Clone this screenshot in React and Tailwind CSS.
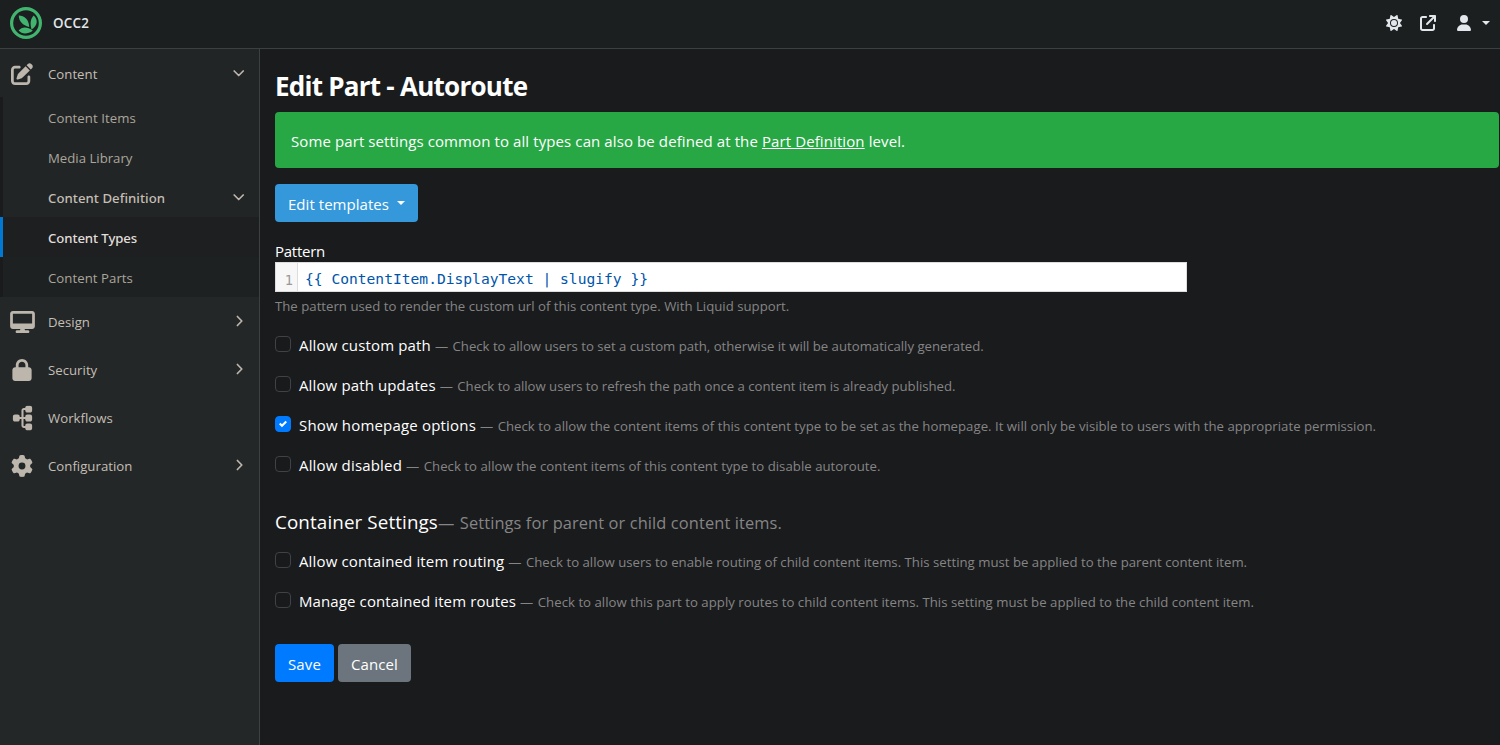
import {
  FaPenToSquare,
  FaDesktop,
  FaLock,
  FaSitemap,
  FaGear,
  FaSun,
  FaArrowUpRightFromSquare,
  FaUser,
} from "react-icons/fa6";

function Logo() {
  return (
    <svg viewBox="0 0 32 32" className="size-8 shrink-0" fill="#41b56f">
      <circle cx="16" cy="16" r="14.4" fill="none" stroke="#41b56f" strokeWidth="3.2" />
      <path d="M8.8 8.6C14.5 8.8 18.8 12.6 19.2 20C12.8 18.4 8.8 14.6 8.8 8.6Z" />
      <path d="M23.8 8.6C28.3 13.2 27.6 18.4 21.6 22.6C19.8 16.6 20.4 12 23.8 8.6Z" />
      <path d="M8.6 23.6C12.2 19.4 17.4 19.6 22.8 23.8C17.4 27.4 12.2 27.6 8.6 23.6Z" />
    </svg>
  );
}

function Chevron({ open }) {
  return (
    <svg
      viewBox="0 0 12 12"
      className="size-3 shrink-0"
      fill="none"
      stroke="#bdb6ad"
      strokeWidth="1.7"
      strokeLinecap="round"
      strokeLinejoin="round"
    >
      <path d={open ? "M1.2 4L5.7 8.5L10.2 4" : "M4.4 1.5L8.8 6L4.4 10.5"} />
    </svg>
  );
}

function Caret({ className }) {
  return (
    <svg viewBox="0 0 8 4" className={`h-1 w-2 ${className}`} fill="currentColor">
      <path d="M0 0H8L4 4Z" />
    </svg>
  );
}

function MenuItem({ icon: Icon, iconClass, label, chevron, open, className = "" }) {
  return (
    <li className={`flex h-12 items-center pr-[14px] text-[13.2px] text-[#c4beb5] ${className}`}>
      <span className="flex w-[45px] justify-center pt-px pr-px text-[#bdb6ad]">
        <Icon className={iconClass} />
      </span>
      <span className="ml-[3px] grow pt-[3px] tracking-[0.02px]">{label}</span>
      {chevron && <Chevron open={open} />}
    </li>
  );
}

function SubItem({ label, className = "", textClass = "", chevron }) {
  return (
    <li
      className={`flex h-10 items-center border-l-[3px] pr-[14px] pl-[45px] text-[13.2px] ${className}`}
    >
      <span className={`grow pt-1 ${textClass}`}>{label}</span>
      {chevron && <Chevron open />}
    </li>
  );
}

function Check({ checked, label, labelClass = "tracking-[0.13px]", hint, hintClass = "" }) {
  return (
    <div className="flex h-10 items-start whitespace-nowrap">
      <span
        className={`flex size-4 items-center justify-center rounded-[4px] border ${
          checked ? "border-[#007bff] bg-[#007bff]" : "border-[#3f4345] bg-[#181a1b]"
        }`}
      >
        {checked && (
          <svg viewBox="0 0 8 8" className="size-2" fill="#fff">
            <path d="M6.564.75l-3.59 3.612-1.538-1.55L0 4.26l2.974 2.99L8 2.193z" />
          </svg>
        )}
      </span>
      <span className="-mt-[3px] ml-2 flex items-baseline leading-6">
        <span className={`text-[15px] text-white ${labelClass}`}>{label}</span>
        <span className={`ml-1 text-[13.2px] text-[#858585] ${hintClass}`}>
          <span className="mr-px">—</span> {hint}
        </span>
      </span>
    </div>
  );
}

export default function App() {
  return (
    <div className="flex h-[745px] w-[1500px] flex-col overflow-hidden bg-[#1a1b1d] font-['Open_Sans','Noto_Sans',sans-serif] text-white">
      <header className="flex h-[49px] shrink-0 items-center border-b border-[#3b4041] bg-[#1c1f20] pr-[10px] pb-[3px] pl-[10px] text-[#e3e6ea]">
        <Logo />
        <span className="ml-[11px] grow pt-px text-[13.4px] font-semibold tracking-[0.25px]">
          OCC2
        </span>
        <FaSun className="size-4" />
        <FaArrowUpRightFromSquare className="ml-[18px] size-4" />
        <FaUser className="ml-5 size-4" />
        <Caret className="ml-[10px]" />
      </header>
      <div className="flex min-h-0 grow">
        <nav className="w-[260px] shrink-0 border-r border-[#3b4041] bg-[#232728]">
          <ul>
            <MenuItem
              icon={FaPenToSquare}
              iconClass="size-[22px]"
              label="Content"
              chevron
              open
              className="bg-[#222526]"
            />
            <SubItem
              label="Content Items"
              className="border-[#191b1c] bg-[#222526] text-[#aba59c]"
              textClass="tracking-[0.08px]"
            />
            <SubItem
              label="Media Library"
              className="border-[#191b1c] bg-[#222526] text-[#aba59c]"
            />
            <SubItem
              label="Content Definition"
              className="border-[#191b1c] bg-[#222526] text-[#c4beb5]"
              textClass="font-['Noto_Sans',sans-serif] font-medium tracking-[0.04px]"
              chevron
            />
            <SubItem
              label="Content Types"
              className="border-[#0078d4] bg-[#1e1f21] text-[#e0dedb]"
              textClass="font-['Noto_Sans',sans-serif] font-medium tracking-[-0.09px]"
            />
            <SubItem
              label="Content Parts"
              className="border-[#191b1c] bg-[#1e2121] text-[#aba59c]"
              textClass="tracking-[0.05px]"
            />
            <MenuItem icon={FaDesktop} iconClass="h-[22px] w-[25px]" label="Design" chevron />
            <MenuItem icon={FaLock} iconClass="h-[22px] w-5" label="Security" chevron />
            <MenuItem icon={FaSitemap} iconClass="h-[22px] w-[25px] -rotate-90" label="Workflows" />
            <MenuItem icon={FaGear} iconClass="size-[22px]" label="Configuration" chevron />
          </ul>
        </nav>
        <main className="min-w-0 grow pt-[18px] pr-px pl-[15px]">
          <h1 className="h-[45px] text-[26px] leading-[38px] font-bold tracking-[-0.75px]">
            Edit Part - Autoroute
          </h1>
          <p className="flex h-14 items-center rounded-[4px] bg-[#28a745] pt-0.5 pl-4 text-[15px] tracking-[0.1px]">
            <span>
              Some part settings common to all types can also be defined at the{" "}
              <a className="underline underline-offset-1">Part Definition</a> level.
            </span>
          </p>
          <button className="mt-4 flex h-[38px] w-[143px] items-center rounded-[4px] bg-[#3498db] pt-0.5 pl-[13px] text-[15px] tracking-[0.04px]">
            Edit templates
            <Caret className="mb-0.5 ml-[8px]" />
          </button>
          <label className="mt-[17px] block h-[23px] text-[15px] leading-6 tracking-[-0.25px]">
            Pattern
          </label>
          <div className="flex h-[30px] w-[912px] border border-[#ddd] bg-white font-['DejaVu_Sans_Mono',monospace] text-[14.62px]">
            <span className="flex w-[22px] items-center justify-end border-r border-[#ddd] bg-[#f7f7f7] pt-1.5 pr-1 text-[13.6px] text-[#999]">
              1
            </span>
            <code className="flex items-center pt-[3px] pl-[7px] font-['DejaVu_Sans_Mono',monospace] whitespace-pre text-[#0055aa]">
              {"{{ ContentItem.DisplayText | slugify }}"}
            </code>
          </div>
          <p className="mt-[3px] h-[41px] text-[13.2px] leading-[22px] tracking-[0.01px] text-[#858585]">
            The pattern used to render the custom url of this content type. With Liquid support.
          </p>
          <Check
            label="Allow custom path"
            labelClass="tracking-[0.15px]"
            hint="Check to allow users to set a custom path, otherwise it will be automatically generated."
            hintClass="tracking-[-0.01px]"
          />
          <Check
            label="Allow path updates"
            hint="Check to allow users to refresh the path once a content item is already published."
            hintClass="tracking-[-0.02px]"
          />
          <Check
            checked
            label="Show homepage options"
            labelClass="tracking-[0.18px]"
            hint="Check to allow the content items of this content type to be set as the homepage. It will only be visible to users with the appropriate permission."
            hintClass="tracking-[0.015px]"
          />
          <Check
            label="Allow disabled"
            labelClass="tracking-[0.17px]"
            hint="Check to allow the content items of this content type to disable autoroute."
            hintClass="tracking-[0.03px]"
          />
          <h2 className="mt-2 flex h-12 items-baseline leading-[28px] whitespace-nowrap">
            <span className="pt-[4px] text-[18.8px] tracking-[0.12px]">Container Settings</span>
            <span className="text-[16.4px] tracking-[0.11px] text-[#858585]">
              <span className="mr-px">—</span> Settings for parent or child content items.
            </span>
          </h2>
          <Check
            label="Allow contained item routing"
            labelClass="tracking-[0.14px]"
            hint="Check to allow users to enable routing of child content items. This setting must be applied to the parent content item."
            hintClass="tracking-[0.01px]"
          />
          <Check
            label="Manage contained item routes"
            labelClass="tracking-[0.11px]"
            hint="Check to allow this part to apply routes to child content items. This setting must be applied to the child content item."
            hintClass="tracking-[0.025px]"
          />
          <div className="mt-3 flex gap-1 text-[15px] tracking-[0.1px]">
            <button className="h-[38px] w-[59px] rounded-[4px] bg-[#007bff] pt-0.5">Save</button>
            <button className="h-[38px] w-[73px] rounded-[4px] bg-[#6c757d] pt-0.5">Cancel</button>
          </div>
        </main>
      </div>
    </div>
  );
}
